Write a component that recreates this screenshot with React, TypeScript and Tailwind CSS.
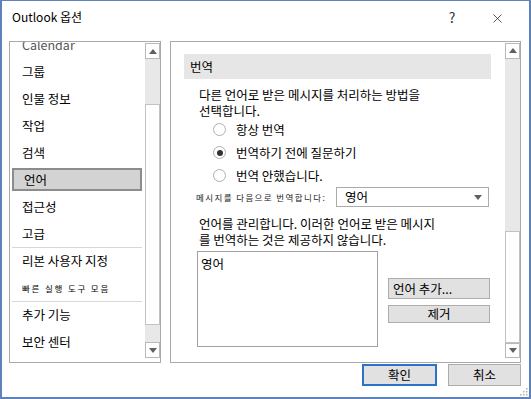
import { X } from 'lucide-react'

type NavItem = { label: string; small?: boolean; sep?: boolean; selected?: boolean; faded?: boolean }

const NAV: NavItem[] = [
  { label: 'Calendar', faded: true },
  { label: '그룹' },
  { label: '인물 정보' },
  { label: '작업' },
  { label: '검색' },
  { label: '언어', selected: true },
  { label: '접근성' },
  { label: '고급' },
  { label: '리본 사용자 지정', sep: true },
  { label: '빠른 실행 도구 모음', small: true },
  { label: '추가 기능', sep: true },
  { label: '보안 센터' },
]

const RADIOS = [
  { label: '항상 번역', checked: false },
  { label: '번역하기 전에 질문하기', checked: true },
  { label: '번역 안했습니다.', checked: false },
]

function Tri({ down }: { down?: boolean }) {
  return (
    <svg width="8" height="5" viewBox="0 0 8 5">
      <path d={down ? 'M0 0h8L4 5z' : 'M0 5h8L4 0z'} fill="#606060" />
    </svg>
  )
}

function ScrollBar({ before, thumb }: { before: number; thumb: number }) {
  return (
    <div className="flex w-[15px] flex-col pt-[1px] pb-[4px]">
      <div className="flex h-[16px] w-[15px] items-center justify-center border border-[#b9b9b9] bg-white">
        <Tri />
      </div>
      <div className="flex flex-1 flex-col bg-[#e8e8e8]">
        <div style={{ height: before }} />
        <div className="border border-[#c2c2c2] bg-white" style={{ height: thumb }} />
      </div>
      <div className="flex h-[16px] w-[15px] items-center justify-center border border-[#b9b9b9] bg-white">
        <Tri down />
      </div>
    </div>
  )
}

function Radio({ checked }: { checked: boolean }) {
  return (
    <span className="flex h-[13px] w-[13px] items-center justify-center rounded-full border border-[#b0b0b0] bg-white">
      {checked && <span className="h-[6px] w-[6px] rounded-full bg-[#333]" />}
    </span>
  )
}

export default function App() {
  return (
    <div className="flex h-[399px] w-[531px] flex-col border-x-2 border-t border-b-2 border-[#5f82b9] bg-white font-['Noto_Sans_CJK_KR','Noto_Sans',sans-serif] text-[12.5px] leading-[16px] text-black">
      {/* title bar */}
      <div className="flex h-[40px] items-start">
        <span className="ml-[10px] mt-[8px] text-[12px]">Outlook 옵션</span>
        <span className="ml-auto mt-[8px] w-[14px] text-center text-[14px] text-[#333]">?</span>
        <X size={15} strokeWidth={1.2} className="ml-[31px] mr-[24px] mt-[10px] text-[#222]" />
      </div>

      {/* body */}
      <div className="flex h-[322px] pl-[7px]">
        <div className="flex h-[322px] w-[152px] border border-[#a9a9a9]">
          <div className="flex-1 overflow-hidden">
            <div className="mt-[-11px]">
              {NAV.map((it) => (
                <div key={it.label} className="flex h-[27px] flex-col">
                  {it.sep && <div className="mx-[2px] mr-[3px] h-px bg-[#d8d8d8]" />}
                  <div
                    className={
                      'mx-[2px] mr-[3px] flex flex-1 items-center pl-[10px] ' +
                      (it.selected ? 'my-[2px] border-2 border-[#8c8c8c] bg-[#d3d3d3] pl-[8px]' : '')
                    }
                  >
                    <span
                      className={
                        (it.small ? 'text-[8.5px] tracking-[1.8px] ' : '') + (it.faded ? 'text-[#555]' : '')
                      }
                    >
                      {it.label}
                    </span>
                  </div>
                </div>
              ))}
            </div>
          </div>
          <ScrollBar before={45} thumb={221} />
        </div>

        <div className="ml-[9px] flex h-[322px] w-[351px] border border-[#a9a9a9]">
          <div className="flex-1 overflow-hidden">
            <div className="ml-[13px] mt-[12px] flex h-[25px] w-[307px] items-center bg-[#e6e6e6] pl-[6px]">번역</div>
            <div className="ml-[28px] mt-[8px]">
              <div>다른 언어로 받은 메시지를 처리하는 방법을</div>
              <div>선택합니다.</div>
            </div>
            <div className="ml-[42px] mt-[-1px]">
              {RADIOS.map((r) => (
                <div key={r.label} className="flex h-[23px] items-center gap-[10px]">
                  <Radio checked={r.checked} />
                  <span>{r.label}</span>
                </div>
              ))}
            </div>
            <div className="flex h-[20px] items-center">
              <span className="ml-[25px] w-[140px] text-[8.5px] tracking-[1.4px] text-[#222]">메시지를 다음으로 번역합니다:</span>
              <div className="flex h-[20px] w-[153px] items-center border border-[#ababab] pl-[8px] pr-[6px]">
                <span>영어</span>
                <span className="ml-auto">
                  <Tri down />
                </span>
              </div>
            </div>
            <div className="ml-[28px] mt-[9px]">
              <div>언어를 관리합니다. 이러한 언어로 받은 메시지</div>
              <div>를 번역하는 것은 제공하지 않습니다.</div>
            </div>
            <div className="ml-[26px] mt-[3px] flex">
              <div className="h-[96px] w-[181px] border border-[#a0a0a0] pl-[3px] pt-[4px]">영어</div>
              <div className="ml-[10px] flex w-[102px] flex-col">
                <button className="mt-[27px] flex h-[21px] items-center border border-[#adadad] bg-[#e1e1e1] pl-[4px]">
                  언어 추가...
                </button>
                <button className="mt-[6px] flex h-[18px] items-center justify-center border border-[#adadad] bg-[#e1e1e1]">
                  제거
                </button>
              </div>
            </div>
          </div>
          <ScrollBar before={172} thumb={112} />
        </div>
      </div>

      {/* footer */}
      <div className="relative flex flex-1 items-start justify-end gap-[11px] pr-[8px] pt-[1px]">
        <button className="flex h-[22px] w-[75px] items-center justify-center border-2 border-[#2a73c5] bg-[#e1e1e1]">
          확인
        </button>
        <button className="flex h-[22px] w-[73px] items-center justify-center border border-[#adadad] bg-[#e1e1e1]">
          취소
        </button>
        <svg className="absolute bottom-[1px] right-[1px]" width="9" height="9" viewBox="0 0 9 9">
          {[
            [7, 1],
            [7, 4],
            [4, 4],
            [7, 7],
            [4, 7],
            [1, 7],
          ].map(([x, y]) => (
            <rect key={`${x}-${y}`} x={x} y={y} width="1.5" height="1.5" fill="#b0b0b0" />
          ))}
        </svg>
      </div>
    </div>
  )
}
